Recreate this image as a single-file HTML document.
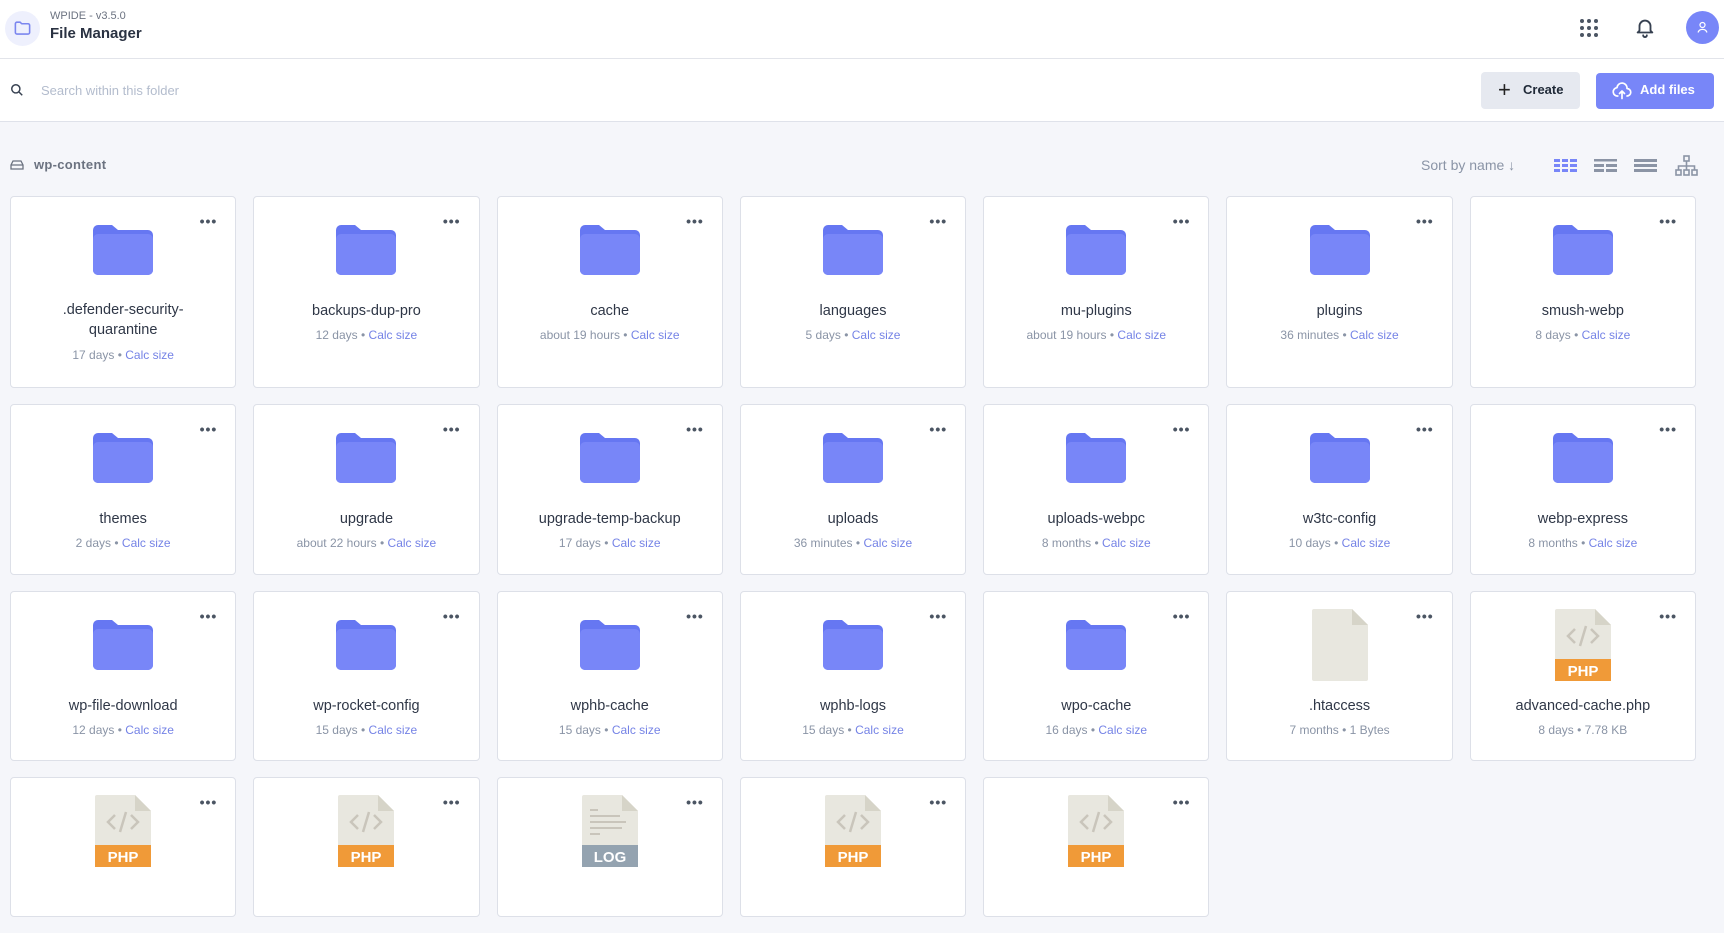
<!DOCTYPE html>
<html><head><meta charset="utf-8">
<style>
*{box-sizing:border-box;margin:0;padding:0}
body{width:1724px;height:854px;overflow:hidden;background:#f5f6fa;font-family:"Liberation Sans",Arial,sans-serif;color:#374151;position:relative}
.hdr{position:absolute;left:0;top:0;width:1724px;height:59px;background:#fff;border-bottom:1px solid #e2e4ea}
.srch{position:absolute;left:0;top:59px;width:1724px;height:63px;background:#fff;border-bottom:1px solid #dfe2ea}
.abs{position:absolute}
.grid{position:absolute;left:10px;top:196px;width:1686px;display:grid;grid-template-columns:repeat(7,1fr);column-gap:17px}
.card{background:#fff;border:1px solid #dde0e8;border-radius:4px;position:relative;margin-bottom:16px}
.r1{height:192px}.r2{height:171px}.r3{height:170px}.r4{height:140px}
.dots{position:absolute;right:18px;top:19px;font-size:14px;letter-spacing:1px;color:#4b5563;font-weight:bold;line-height:10px}
.ic{position:absolute;left:50%;transform:translateX(-50%);top:28px}
.nm{position:absolute;left:0;right:0;text-align:center;font-size:14.5px;color:#2f3747;line-height:20px}
.mt{position:absolute;left:0;right:0;text-align:center;font-size:12px;color:#8a94a6}
.mt b{font-weight:normal;color:#7583e6}
</style></head><body>
<div class="hdr">
  <div class="abs" style="left:5px;top:11px;width:35px;height:35px;border-radius:50%;background:#eef0fd"></div>
  <svg class="abs" style="left:13px;top:19px" width="19" height="19" viewBox="0 0 24 24" fill="none" stroke="#7b86ef" stroke-width="2" stroke-linejoin="round"><path d="M3 6a2 2 0 0 1 2-2h4l2 2h8a2 2 0 0 1 2 2v9a2 2 0 0 1-2 2H5a2 2 0 0 1-2-2z"/></svg>
  <div class="abs" style="left:50px;top:10px;font-size:11px;color:#6b7280">WPIDE - v3.5.0</div>
  <div class="abs" style="left:50px;top:25px;font-size:15px;font-weight:bold;color:#2a3242">File Manager</div>
  <svg class="abs" style="left:1579px;top:18px" width="20" height="20" viewBox="0 0 20 20" fill="#4b5563"><circle cx="3" cy="3" r="2"/><circle cx="10" cy="3" r="2"/><circle cx="17" cy="3" r="2"/><circle cx="3" cy="10" r="2"/><circle cx="10" cy="10" r="2"/><circle cx="17" cy="10" r="2"/><circle cx="3" cy="17" r="2"/><circle cx="10" cy="17" r="2"/><circle cx="17" cy="17" r="2"/></svg>
  <svg class="abs" style="left:1634px;top:16px" width="22" height="22" viewBox="0 0 24 24" fill="none" stroke="#374151" stroke-width="2" stroke-linecap="round" stroke-linejoin="round"><path d="M18 16V11a6 6 0 0 0-12 0v5l-2 2h16z"/><path d="M10 21a2 2 0 0 0 4 0"/></svg>
  <div class="abs" style="left:1686px;top:11px;width:33px;height:33px;border-radius:50%;background:#7886f8"></div>
  <svg class="abs" style="left:1695px;top:20px" width="15" height="15" viewBox="0 0 24 24" fill="none" stroke="#fff" stroke-width="2"><circle cx="12" cy="8" r="4"/><path d="M5 20c1-4 4-5 7-5s6 1 7 5"/></svg>
</div>
<div class="srch">
  <svg class="abs" style="left:10px;top:24px" width="14" height="14" viewBox="0 0 24 24" fill="none" stroke="#374151" stroke-width="2.5"><circle cx="10" cy="10" r="7"/><path d="M15 15l6 6"/></svg>
  <div class="abs" style="left:41px;top:24px;font-size:13px;color:#b3bccd">Search within this folder</div>
  <div class="abs" style="left:1481px;top:13px;width:99px;height:37px;background:#e6e9f0;border-radius:4px"></div>
  <div class="abs" style="left:1498px;top:18px;font-size:22px;color:#222;font-weight:300">+</div>
  <div class="abs" style="left:1523px;top:23px;font-size:13px;font-weight:bold;color:#1f2937">Create</div>
  <div class="abs" style="left:1596px;top:14px;width:118px;height:36px;background:#7886f8;border-radius:4px"></div>
  <svg class="abs" style="left:1612px;top:22px" width="20" height="20" viewBox="0 0 24 24" fill="none" stroke="#fff" stroke-width="2" stroke-linecap="round" stroke-linejoin="round"><path d="M7 18a5 5 0 0 1-1-10 6 6 0 0 1 12 1 4 4 0 0 1 0 9"/><path d="M12 12v9M9 15l3-3 3 3"/></svg>
  <div class="abs" style="left:1640px;top:23px;font-size:13px;font-weight:bold;color:#fff">Add files</div>
</div>
<svg class="abs" style="left:10px;top:159px" width="14" height="12" viewBox="0 0 14 12" fill="none" stroke="#6b7280" stroke-width="1.3"><path d="M1 6l2-4h8l2 4v4H1z M1 6h12"/></svg>
<div class="abs" style="left:34px;top:157px;font-size:13px;font-weight:bold;color:#6b7280;letter-spacing:.3px">wp-content</div>
<div class="abs" style="left:1421px;top:157px;font-size:14px;color:#8a94a6">Sort by name ↓</div>
<svg class="abs" style="left:1554px;top:159px" width="23" height="14" viewBox="0 0 23 14" fill="#7886f8"><rect x="0" y="0" width="6" height="3"/><rect x="8" y="0" width="6" height="3"/><rect x="16" y="0" width="7" height="3"/><rect x="0" y="5" width="6" height="3"/><rect x="8" y="5" width="6" height="3"/><rect x="16" y="5" width="7" height="3"/><rect x="0" y="10" width="6" height="3"/><rect x="8" y="10" width="6" height="3"/><rect x="16" y="10" width="7" height="3"/></svg>
<svg class="abs" style="left:1594px;top:159px" width="23" height="14" viewBox="0 0 23 14" fill="#8b94a5"><rect x="0" y="0" width="23" height="2.5"/><rect x="0" y="5" width="10" height="3"/><rect x="12" y="5" width="11" height="3"/><rect x="0" y="10" width="10" height="3"/><rect x="12" y="10" width="11" height="3"/></svg>
<svg class="abs" style="left:1634px;top:159px" width="23" height="14" viewBox="0 0 23 14" fill="#8b94a5"><rect x="0" y="0" width="23" height="3"/><rect x="0" y="5" width="23" height="3"/><rect x="0" y="10" width="23" height="3"/></svg>
<svg class="abs" style="left:1675px;top:155px" width="23" height="22" viewBox="0 0 23 22" fill="none" stroke="#8b94a5" stroke-width="1.6"><rect x="9" y="1" width="5" height="5"/><rect x="1" y="15" width="5" height="5"/><rect x="9" y="15" width="5" height="5"/><rect x="17" y="15" width="5" height="5"/><path d="M11.5 6v9M3.5 15v-4h16v4"/></svg>

<div class="grid" id="g">
</div>
<script>
const F='<svg class="ic" width="60" height="50" viewBox="0 0 60 50"><path d="M0 5a5 5 0 0 1 5-5h14l6 5h30a5 5 0 0 1 5 5v35a5 5 0 0 1-5 5H5a5 5 0 0 1-5-5z" fill="#6677f2"/><rect x="0" y="9" width="60" height="41" rx="5" fill="#7886f8"/></svg>';
function doc(label,col){
 let band=label?`<rect x="0" y="50" width="56" height="22" rx="0" fill="${col}"/><text x="28" y="67" text-anchor="middle" font-family="Liberation Sans,Arial,sans-serif" font-weight="bold" font-size="15" fill="#fff">${label}</text>`:'';
 let inner=label==='LOG'?'<g fill="#c9c5bb"><rect x="8" y="14" width="8" height="2"/><rect x="8" y="20" width="30" height="2"/><rect x="8" y="26" width="36" height="2"/><rect x="8" y="32" width="32" height="2"/><rect x="8" y="38" width="10" height="2"/></g>':(label?'<path d="M20 20l-7 7 7 7M36 20l7 7-7 7M31 17l-6 20" stroke="#c9c5bb" stroke-width="2.5" fill="none"/>':'');
 return `<svg class="ic" style="top:17px" width="56" height="72" viewBox="0 0 56 72"><path d="M2 0h38l16 16v54a2 2 0 0 1-2 2H2a2 2 0 0 1-2-2V2a2 2 0 0 1 2-2z" fill="#e8e7df"/><path d="M40 0l16 16H40z" fill="#d6d4c8"/>${inner}${band}</svg>`;
}
const rows=[
 ['r1',[['.defender-security-<br>quarantine','17 days',1],['backups-dup-pro','12 days'],['cache','about 19 hours'],['languages','5 days'],['mu-plugins','about 19 hours'],['plugins','36 minutes'],['smush-webp','8 days']]],
 ['r2',[['themes','2 days'],['upgrade','about 22 hours'],['upgrade-temp-backup','17 days'],['uploads','36 minutes'],['uploads-webpc','8 months'],['w3tc-config','10 days'],['webp-express','8 months']]],
 ['r3',[['wp-file-download','12 days'],['wp-rocket-config','15 days'],['wphb-cache','15 days'],['wphb-logs','15 days'],['wpo-cache','16 days'],['.htaccess','7 months • 1 Bytes',0,''],['advanced-cache.php','8 days • 7.78 KB',0,'PHP']]],
 ['r4',[['','',0,'PHP'],['','',0,'PHP'],['','',0,'LOG'],['','',0,'PHP'],['','',0,'PHP']]]
];
let h='';
for(const [cls,items] of rows){for(const it of items){
 const [n,m,two,ft]=it;let ic=ft===undefined?F:doc(ft,ft==='LOG'?'#94a3b0':'#f09a38');
 let meta=ft===undefined?`${m} • <b>Calc size</b>`:m;
 h+=`<div class="card ${cls}"><div class="dots">•••</div>${ic}`;
 if(n){h+=`<div class="nm" style="top:${two?103:104}px">${n}</div><div class="mt" style="top:${two?151:131}px">${meta}</div>`;}
 h+='</div>';
}}
document.getElementById('g').innerHTML=h;
</script>
</body></html>
